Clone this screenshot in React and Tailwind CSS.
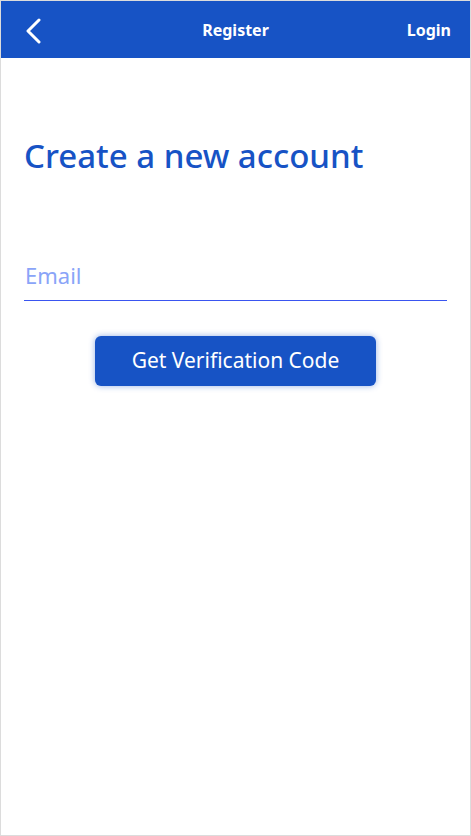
import React from 'react';

export default function App() {
  return (
    <div
      className="h-screen w-full bg-white border border-[#dcdcdc] flex flex-col"
      style={{ fontFamily: '"Noto Sans", "Open Sans", sans-serif' }}
    >
      {/* Header */}
      <div className="h-[57px] bg-[#1753c5] flex items-center justify-between pl-[22px] pr-[19px] relative">
        <button className="w-[30px] h-[30px] flex items-center justify-start mt-[2px]">
          <svg width="20" height="26" viewBox="0 0 20 26" fill="none">
            <path d="M16 2 L5 13 L16 24" stroke="white" strokeWidth="3" strokeLinecap="round" strokeLinejoin="round" />
          </svg>
        </button>
        <span className="absolute left-1/2 -translate-x-1/2 text-white font-bold text-[16px]">Register</span>
        <span className="text-white font-bold text-[16px]">Login</span>
      </div>

      {/* Content */}
      <div className="flex flex-col px-[23px] pt-[81px]">
        <h1 className="text-[#1753c5] text-[33px] font-medium leading-none">Create a new account</h1>

        <div className="mt-[87px] border-b border-b-[#3a55f0] pb-[9px]">
          <input
            type="email"
            placeholder="Email"
            className="w-full outline-none text-[22px] leading-[32px] placeholder:text-[#8aa4f8] text-[#1753c5] px-[1px]"
          />
        </div>

        <div className="flex justify-center mt-[35px]">
          <button className="w-[281px] h-[50px] rounded-[6px] bg-[#1753c5] text-white text-[21px] shadow-[0_0_6px_rgba(23,83,197,0.45)]">
            Get Verification Code
          </button>
        </div>
      </div>
    </div>
  );
}
